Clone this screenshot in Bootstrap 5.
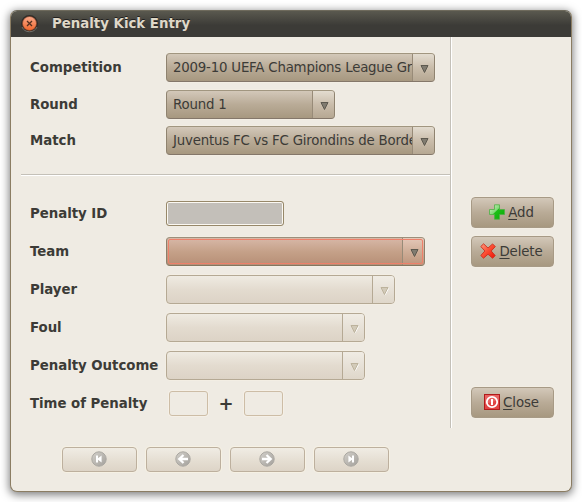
<!DOCTYPE html>
<html lang="en">
<head>
<meta charset="utf-8">
<title>Penalty Kick Entry</title>
<link rel="stylesheet" href="https://cdn.jsdelivr.net/npm/bootstrap@5.3.0/dist/css/bootstrap.min.css">
<style>
body{margin:0;background:#fff;color:#3c3b37;font:13.33px/16px "DejaVu Sans",sans-serif;overflow:hidden}
.win{width:562px;height:482px;margin:10px;border:1px solid #8b7d63;border-top-color:#6e6a5c;border-radius:7px;background:#efebe3;overflow:hidden;box-shadow:0 2px 8px 1px rgba(0,0,0,.5)}
.title-bar{height:26px;padding:0 10px;background:linear-gradient(#5a594f,#3c3b37 55%);color:#dfd8c8;text-shadow:0 -1px 0 #22211f}
.title-bar svg{margin:0 13px 1px -1px}
.body-row{height:391px}
.form-side{width:440px;padding-left:10px;border-right:1px solid #c4c0b8;box-shadow:1px 0 0 #fff}
.top-set{height:138px;padding:16px 0 0 9px;border-bottom:1px solid #c4c0b8;box-shadow:0 1px 0 #fff}
.low-set{padding:24px 0 0 9px}
.line{height:29px;margin-bottom:9px}
.top-set .line{margin-bottom:8px}
.top-set .line:nth-child(2){margin-bottom:7px}
.lbl{width:136px;font-weight:700;white-space:nowrap;letter-spacing:-.03px}
.combo{height:29px;border:1px solid #93866f;border-color:#a19680 #8f8370 #84776a;border-radius:4px;background:linear-gradient(#d3c8b9,#b9ab97 50%,#a79880);box-shadow:0 0 0 1px rgba(246,241,230,.55);overflow:hidden;position:relative}
.combo .val{flex:1;min-width:0;overflow:hidden;white-space:nowrap;padding-left:6px;letter-spacing:-.2px}
.arrow{width:22px;height:27px;border-left:1px solid #988b78;background:linear-gradient(#e3dcd0,#cabdab 50%,#b6a893);padding:1px 0 0 2px}
.combo.hot{background:linear-gradient(#d8b8a8,#c5a189 50%,#b78f76);border-color:#9b8f7c #8d7f6c #84765f}
.hot .arrow{background:linear-gradient(#e5c8b9,#cfae98 50%,#bd957c)}
.hot::after{content:"";position:absolute;inset:1px;border:1px solid #ee806a;border-radius:2px}
.combo.off{background:linear-gradient(#efebe2,#e3dbcf 50%,#dcd3c6);border-color:#b5a994}
.off .arrow{background:linear-gradient(#f0ece4,#e7e1d7 50%,#dfd7ca);border-color:#b5a994}
.w269{width:269px}.w169{width:169px}.w259{width:259px}.w229{width:229px}.w199{width:199px}
.idbox{width:118px;height:25px;border:1px solid #978869;border-radius:3px;background:#c3bfb9;box-shadow:inset 0 0 0 1px #fbf8f2}
.time-lbl{margin-right:3px}
.timebox{width:39px;height:25px;border:1px solid #cdbda6;border-radius:3px;background:#efebe3;box-shadow:0 0 0 1px rgba(248,244,234,.6)}
.plus{width:36px;font:700 18px/20px "DejaVu Sans",sans-serif}
.side{padding:160px 0 0 20px}
.act{width:83px;height:31px;border:1px solid #a79a86;border-radius:4px;padding:0 2px 0 0;color:#3c3b37;font-size:13.33px;background:linear-gradient(#d3c8b9,#b9ab97 50%,#a79880);box-shadow:0 0 0 1px rgba(246,241,230,.55);letter-spacing:-.1px}
.act span::first-letter{text-decoration:underline;text-underline-offset:2px}
.act svg{margin:0 3px 1px 0}
.act.last{margin-top:112px}
.nav-line{padding:19px 0 0 51px;gap:9px}
.step{width:75px;height:25px;border:1px solid #bdb09e;border-radius:4px;padding:0 1px 1px 0;background:linear-gradient(#f0ece4,#e4ddd1 60%,#ddd4c7);box-shadow:0 0 0 1px rgba(247,242,228,.8)}
</style>
<script src="https://cdn.jsdelivr.net/npm/bootstrap@5.3.0/dist/js/bootstrap.bundle.min.js"></script>
</head>
<body>
<svg width="0" height="0" class="position-absolute">
<defs>
<linearGradient id="gOrange" x2="0" y2="1"><stop stop-color="#f9a98a"/><stop offset="1" stop-color="#f0662c"/></linearGradient>
<linearGradient id="gGreen" x2="1" y2="1"><stop offset=".1" stop-color="#c4f0b4"/><stop offset=".42" stop-color="#7fd977"/><stop offset=".46" stop-color="#1dc018"/><stop offset="1" stop-color="#0ba805"/></linearGradient>
<linearGradient id="gRed" x2="1" y2="1"><stop stop-color="#ff9a80"/><stop offset=".5" stop-color="#fb4a30"/><stop offset="1" stop-color="#ee1208"/></linearGradient>
<linearGradient id="gGray" x2="1" y2="1"><stop stop-color="#d3d0ca"/><stop offset="1" stop-color="#a3a09b"/></linearGradient>
<symbol id="tri" viewBox="0 0 9 9"><path d="M1 1.5h7L4.5 8.5z" fill="#807b70" stroke="#5d594f"/></symbol>
<symbol id="triOff" viewBox="0 0 9 9"><path d="M2 2.5h7L5.5 9z" fill="#fff"/><path d="M1 1.5h7L4.5 8.5z" fill="#d2cab8" stroke="#bcb29c"/></symbol>
</defs>
</svg>
<main class="win">
  <header class="title-bar d-flex align-items-center fw-bold">
    <svg width="19" height="19" viewBox="0 0 19 19"><circle cx="9.5" cy="9.5" r="8.5" fill="#2d2c29"/><path d="M2 13a8.3 8.3 0 0 0 15 0" fill="none" stroke="#74716a"/><circle cx="9.5" cy="9.5" r="7" fill="url(#gOrange)" stroke="#7d3a20" stroke-width=".6"/><path d="M7 7l5 5M12 7l-5 5" stroke="#53301f" stroke-width="1.3"/></svg>
    <span>Penalty Kick Entry</span>
  </header>
  <div class="body-row d-flex">
    <section class="form-side">
      <div class="top-set">
        <div class="line d-flex align-items-center"><label class="lbl">Competition</label><div class="combo w269 d-flex align-items-center"><span class="val">2009-10 UEFA Champions League Group</span><span class="arrow d-flex align-items-center justify-content-center"><svg width="9" height="9"><use href="#tri"/></svg></span></div></div>
        <div class="line d-flex align-items-center"><label class="lbl">Round</label><div class="combo w169 d-flex align-items-center"><span class="val">Round 1</span><span class="arrow d-flex align-items-center justify-content-center"><svg width="9" height="9"><use href="#tri"/></svg></span></div></div>
        <div class="line d-flex align-items-center"><label class="lbl">Match</label><div class="combo w269 d-flex align-items-center"><span class="val">Juventus FC vs FC Girondins de Bordeaux</span><span class="arrow d-flex align-items-center justify-content-center"><svg width="9" height="9"><use href="#tri"/></svg></span></div></div>
      </div>
      <div class="low-set">
        <div class="line d-flex align-items-center"><label class="lbl">Penalty ID</label><div class="idbox"></div></div>
        <div class="line d-flex align-items-center"><label class="lbl">Team</label><div class="combo hot w259 d-flex align-items-center"><span class="val"></span><span class="arrow d-flex align-items-center justify-content-center"><svg width="9" height="9"><use href="#tri"/></svg></span></div></div>
        <div class="line d-flex align-items-center"><label class="lbl">Player</label><div class="combo off w229 d-flex align-items-center"><span class="val"></span><span class="arrow d-flex align-items-center justify-content-center"><svg width="9" height="9"><use href="#triOff"/></svg></span></div></div>
        <div class="line d-flex align-items-center"><label class="lbl">Foul</label><div class="combo off w199 d-flex align-items-center"><span class="val"></span><span class="arrow d-flex align-items-center justify-content-center"><svg width="9" height="9"><use href="#triOff"/></svg></span></div></div>
        <div class="line d-flex align-items-center"><label class="lbl">Penalty Outcome</label><div class="combo off w199 d-flex align-items-center"><span class="val"></span><span class="arrow d-flex align-items-center justify-content-center"><svg width="9" height="9"><use href="#triOff"/></svg></span></div></div>
        <div class="line d-flex align-items-center"><label class="lbl time-lbl">Time of Penalty</label><div class="timebox"></div><span class="plus text-center">+</span><div class="timebox"></div></div>
      </div>
    </section>
    <aside class="side d-flex flex-column gap-2">
      <button class="btn act d-flex align-items-center justify-content-center"><svg width="16" height="16" viewBox="0 0 16 16"><path d="M5.5.8h5v4.7h5v5h-5v4.7h-5v-4.7h-5v-5h5z" fill="url(#gGreen)" stroke="#4fae45" stroke-width=".8"/></svg><span class="d-inline-block">Add</span></button>
      <button class="btn act d-flex align-items-center justify-content-center"><svg width="16" height="16" viewBox="0 0 16 16"><path d="M3.6.8L8 5 12.6.9 15.3 3.6 11.2 8l4 4.6-2.6 2.7L8 11.2l-4.5 4L.8 12.5 4.9 8 .8 3.5z" fill="url(#gRed)" stroke="#c9301f" stroke-width=".9"/></svg><span class="d-inline-block">Delete</span></button>
      <button class="btn act last d-flex align-items-center justify-content-center"><svg width="16" height="16" viewBox="0 0 16 16"><rect x=".5" y=".5" width="15" height="15" fill="#e04444" stroke="#b01b1b"/><path d="M1 1h14v5L1 10z" fill="#f08080" opacity=".5"/><circle cx="8" cy="8" r="5.2" fill="none" stroke="#fff" stroke-width="1.8"/><path d="M8 5v6" stroke="#fff" stroke-width="2"/></svg><span class="d-inline-block">Close</span></button>
    </aside>
  </div>
  <footer class="nav-line d-flex">
    <button class="btn step d-flex align-items-center justify-content-center" aria-label="First"><svg width="16" height="16" viewBox="0 0 16 16"><circle cx="8" cy="8" r="7.2" fill="url(#gGray)" stroke="#aaa7a1"/><path d="M5 4.5h2v2.7l3.6-2.7v7L7 8.8v2.7H5z" fill="#fff"/></svg></button>
    <button class="btn step d-flex align-items-center justify-content-center" aria-label="Previous"><svg width="16" height="16" viewBox="0 0 16 16"><circle cx="8" cy="8" r="7.2" fill="url(#gGray)" stroke="#aaa7a1"/><path d="M8.5 4L4.3 8l4.2 4M4.5 8H13" fill="none" stroke="#fff" stroke-width="2.3"/></svg></button>
    <button class="btn step d-flex align-items-center justify-content-center" aria-label="Next"><svg width="16" height="16" viewBox="0 0 16 16"><circle cx="8" cy="8" r="7.2" fill="url(#gGray)" stroke="#aaa7a1"/><path d="M7.5 4l4.2 4-4.2 4M11.5 8H3" fill="none" stroke="#fff" stroke-width="2.3"/></svg></button>
    <button class="btn step d-flex align-items-center justify-content-center" aria-label="Last"><svg width="16" height="16" viewBox="0 0 16 16"><circle cx="8" cy="8" r="7.2" fill="url(#gGray)" stroke="#aaa7a1"/><path d="M11 4.5H9v2.7L5.4 4.5v7L9 8.8v2.7h2z" fill="#fff"/></svg></button>
  </footer>
</main>
</body>
</html>
